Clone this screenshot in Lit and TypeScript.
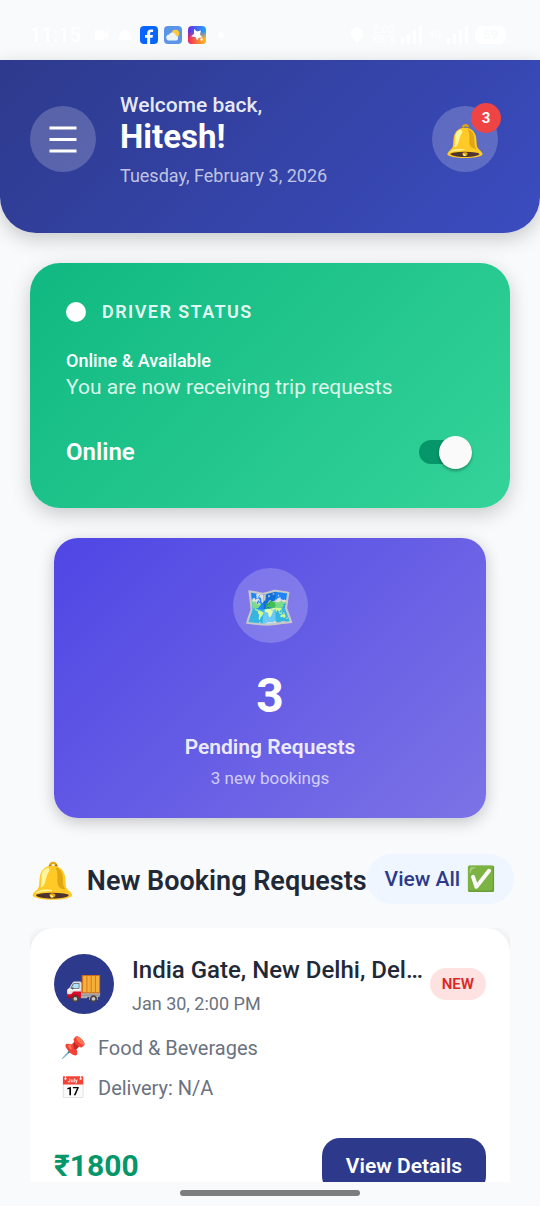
import { LitElement, html, css, svg } from "lit";
import { customElement, property, state } from "lit/decorators.js";

interface Booking {
  pickup: string;
  when: string;
  goods: string;
  delivery: string;
  fare: string;
}

const base = css`
  * { box-sizing: border-box; }
  h1, h2, h3, p { margin: 0; font-weight: inherit; }
  button { font: inherit; border: 0; padding: 0; cursor: pointer; }
  .emoji { font-family: "Noto Color Emoji", sans-serif; font-weight: 400; }
`;

@customElement("status-bar")
export class StatusBar extends LitElement {
  static styles = [base, css`
    :host { display: flex; align-items: center; justify-content: space-between; height: 60px; padding: 10px 34px 0 30px; color: #ffffff; }
    .side { display: flex; align-items: center; gap: 6px; }
    .time { font-size: 20px; line-height: 24px; font-weight: 500; margin-right: 5px; }
    .rate { font-size: 10px; line-height: 10px; font-weight: 500; text-align: center; }
    .dot { width: 6px; height: 6px; border-radius: 3px; background: #ffffff; margin-left: 6px; }
    .battery { font-size: 13px; line-height: 18px; font-weight: 700; padding: 0 8px; border-radius: 7px; background: #ffffff; color: #f8fafc; }
    svg { display: block; }
  `];

  private signal() {
    return html`<svg width="22" height="18" viewBox="0 0 22 18" aria-hidden="true">
      ${[0, 1, 2, 3].map((i) => svg`<rect x=${i * 6} y=${12 - i * 4} width="3" height=${6 + i * 4} rx="1" fill="#fff" />`)}
    </svg>`;
  }

  render() {
    return html`
      <div class="side">
        <span class="time">11:15</span>
        <svg width="18" height="18" viewBox="0 0 18 18" aria-hidden="true"><path d="M3 4h9v3l4-3v10l-4-3v3H3z" fill="#fff" /></svg>
        <svg width="18" height="18" viewBox="0 0 18 18" aria-hidden="true"><path d="M9 4a5 5 0 0 1 5 5l2 5H2l2-5a5 5 0 0 1 5-5z" fill="#fff" /></svg>
        <svg width="18" height="18" viewBox="0 0 18 18" aria-hidden="true">
          <rect width="18" height="18" rx="4" fill="#0866ff" />
          <path d="M7.2 18v-6.3H5V9h2.200V7.400c0-2.700 1.300-4 3.900-4 .8 0 1.500.1 2 .2v2.500h-1.400c-1.200 0-1.600.5-1.600 1.500V9h2.900l-.5 2.700h-2.400V18z" fill="#fff" />
        </svg>
        <svg width="18" height="18" viewBox="0 0 18 18" aria-hidden="true">
          <rect width="18" height="18" rx="4" fill="#5b95e8" />
          <circle cx="11.500" cy="7.500" r="3.800" fill="#ffc93c" />
          <path d="M5.500 14.500a3 3 0 0 1-.4-6 3.600 3.600 0 0 1 6.800 1 2.600 2.600 0 0 1 .6 5z" fill="#eef3f8" />
        </svg>
        <svg width="18" height="18" viewBox="0 0 18 18" aria-hidden="true">
          <defs>
            <linearGradient id="g1" x1="0" y1="0" x2="1" y2="0"><stop offset="0" stop-color="#6a2be0" /><stop offset="1" stop-color="#1ea7ff" /></linearGradient>
            <linearGradient id="g2" x1="0" y1="0" x2="1" y2="0"><stop offset="0" stop-color="#f0285a" /><stop offset="1" stop-color="#ffc21a" /></linearGradient>
            <linearGradient id="g3" x1="0" y1="0" x2="0" y2="1"><stop offset=".3" stop-color="#fff" stop-opacity="0" /><stop offset=".7" stop-color="#fff" /></linearGradient>
            <mask id="m"><rect width="18" height="18" fill="url(#g3)" /></mask>
          </defs>
          <rect width="18" height="18" rx="4" fill="url(#g1)" />
          <rect width="18" height="18" rx="4" fill="url(#g2)" mask="url(#m)" />
          <path d="M6 3l3 2.500 4-1-1 4 2.500 3-3.700.3L9 14.500 7.500 11 3 10.500 6 8z" fill="#fff" />
          <circle cx="13.500" cy="13.500" r="1.200" fill="#fff" />
        </svg>
        <span class="dot"></span>
      </div>
      <div class="side">
        <svg width="18" height="18" viewBox="0 0 18 18" aria-hidden="true"><path d="M9 1l6 3v6l-6 7-6-7V4z" fill="#fff" /></svg>
        <span class="rate">2.00<br />KB/S</span>
        ${this.signal()}
        <span class="rate">4G</span>
        ${this.signal()}
        <span class="battery">59</span>
      </div>
    `;
  }
}

@customElement("booking-card")
export class BookingCard extends LitElement {
  @property({ attribute: false }) booking!: Booking;

  static styles = [base, css`
    :host { display: block; }
    .card { padding: 26px 24px 24px; border-radius: 24px; background: #ffffff; box-shadow: 0 4px 12px rgba(0, 0, 0, 0.16); }
    .top { display: flex; align-items: center; }
    .avatar { flex: none; display: grid; place-items: center; width: 60px; height: 60px; padding-top: 3px; border-radius: 30px; background: #2d3a8c; font-size: 30px; line-height: 36px; }
    .info { flex: 1; min-width: 0; margin-left: 18px; }
    .place { font-size: 24px; line-height: 32px; font-weight: 500; color: #1f2937; white-space: nowrap; overflow: hidden; text-overflow: ellipsis; }
    .when { margin-top: 8px; font-size: 18px; line-height: 20px; color: #6b7280; }
    .tag { flex: none; margin-left: 6px; padding: 0 12px; border-radius: 16px; background: #fee2e2; color: #dc2626; font-size: 15px; line-height: 32px; font-weight: 600; }
    .facts { display: grid; gap: 12px; margin: 20px 0 36px; padding: 0 6px; }
    .fact { display: flex; align-items: center; gap: 12px; font-size: 20px; line-height: 28px; color: #6b7280; }
    .fact .emoji { width: 26px; font-size: 21px; }
    .bottom { display: flex; align-items: center; justify-content: space-between; }
    .fare { font-size: 30px; line-height: 36px; font-weight: 700; color: #059669; }
    .details { padding: 0 24px; border-radius: 18px; background: #2d3a8c; color: #ffffff; font-size: 21px; line-height: 56px; font-weight: 600; }
  `];

  render() {
    const b = this.booking;
    return html`
      <article class="card">
        <div class="top">
          <div class="avatar emoji">🚚</div>
          <div class="info">
            <h3 class="place">${b.pickup}</h3>
            <p class="when">${b.when}</p>
          </div>
          <span class="tag">NEW</span>
        </div>
        <div class="facts">
          <p class="fact"><span class="emoji">📌</span>${b.goods}</p>
          <p class="fact"><span class="emoji">📅</span>${b.delivery}</p>
        </div>
        <div class="bottom">
          <span class="fare">${b.fare}</span>
          <button class="details">View Details</button>
        </div>
      </article>
    `;
  }
}

@customElement("app-root")
export class AppRoot extends LitElement {
  @state() private online = true;

  private bookings: Booking[] = [
    {
      pickup: "India Gate, New Delhi, Delhi, India",
      when: "Jan 30, 2:00 PM",
      goods: "Food & Beverages",
      delivery: "Delivery: N/A",
      fare: "₹1800",
    },
  ];

  static styles = [base, css`
    :host { display: flex; flex-direction: column; height: 100vh; overflow: hidden; background: #f8fafc; color: #1f2937; font-family: Roboto, "Liberation Sans", sans-serif; }
    main { flex: 1; min-height: 0; overflow: hidden; }

    .header { display: flex; align-items: center; padding: 31px 42px 46px 30px; border-radius: 0 0 36px 36px; background: linear-gradient(135deg, #2d3a8c, #3b4cc0); box-shadow: 0 6px 20px rgba(0, 0, 0, 0.2); color: #ffffff; }
    .round { flex: none; display: grid; place-items: center; width: 66px; height: 66px; border-radius: 33px; background: rgba(255, 255, 255, 0.2); color: inherit; }
    .greeting { flex: 1; min-width: 0; margin: 0 24px; }
    .hello { font-size: 21px; line-height: 28px; font-weight: 500; color: rgba(255, 255, 255, 0.9); }
    .name { font-size: 33px; line-height: 36px; font-weight: 700; }
    .date { margin-top: 10px; font-size: 18px; line-height: 22px; color: rgba(255, 255, 255, 0.7); }
    .alerts { position: relative; padding-top: 3px; font-size: 32px; line-height: 36px; }
    .count { position: absolute; top: -3px; right: -3px; width: 30px; height: 30px; border-radius: 15px; background: #ef4444; font-size: 15px; line-height: 30px; font-weight: 700; text-align: center; }

    .status { margin: 30px 30px 0; padding: 36px; border-radius: 30px; background: linear-gradient(135deg, #10b981, #34d399); box-shadow: 0 6px 20px rgba(0, 0, 0, 0.2); color: #ffffff; }
    .status-head { display: flex; align-items: center; gap: 16px; }
    .dot { width: 20px; height: 20px; border-radius: 10px; background: #ffffff; }
    .label { font-size: 18px; line-height: 25px; font-weight: 600; letter-spacing: 0.08em; color: rgba(255, 255, 255, 0.9); }
    .mode { margin-top: 26px; font-size: 18px; line-height: 22px; font-weight: 500; }
    .note { font-size: 21px; line-height: 30px; color: rgba(255, 255, 255, 0.85); }
    .toggle { display: flex; align-items: center; justify-content: space-between; margin-top: 30px; font-size: 24px; line-height: 40px; font-weight: 600; cursor: pointer; }
    .switch { appearance: none; display: flex; align-items: center; justify-content: flex-end; width: 53px; height: 24px; margin: 0 2px 0 0; border-radius: 12px; background: #059669; cursor: pointer; }
    .switch:not(:checked) { justify-content: flex-start; background: #9ca3af; }
    .switch::before { content: ""; width: 33px; height: 33px; border-radius: 17px; background: #fafafa; box-shadow: 0 2px 3px rgba(0, 0, 0, 0.3); }

    .pending { display: flex; flex-direction: column; align-items: center; margin: 30px 54px 0; padding: 30px; border-radius: 24px; background: linear-gradient(135deg, #4f46e5, #7c73e6); box-shadow: 0 4px 16px rgba(0, 0, 0, 0.22); color: #ffffff; }
    .map { display: grid; place-items: center; width: 75px; height: 75px; padding-top: 4px; border-radius: 38px; background: rgba(255, 255, 255, 0.2); font-size: 42px; line-height: 50px; }
    .total { margin-top: 23px; font-size: 48px; line-height: 60px; font-weight: 700; }
    .what { margin-top: 6px; font-size: 21px; line-height: 30px; font-weight: 600; color: rgba(255, 255, 255, 0.9); }
    .extra { margin-top: 6px; font-size: 17px; line-height: 20px; color: rgba(255, 255, 255, 0.7); }

    .section { display: flex; align-items: center; justify-content: space-between; margin: 36px 26px 24px 30px; }
    .title { display: flex; align-items: center; gap: 12px; padding-top: 3px; font-size: 27px; line-height: 36px; font-weight: 600; white-space: nowrap; }
    .title .emoji { font-size: 36px; }
    .all { display: flex; align-items: center; gap: 6px; padding: 1px 18px 0; border-radius: 25px; background: #eff6ff; color: #2d3a8c; font-size: 21px; line-height: 49px; font-weight: 500; white-space: nowrap; text-decoration: none; }
    .all .emoji { font-size: 24px; }
    .list { margin: 0 30px; overflow: hidden; }

    .gesture { flex: none; display: grid; place-items: center; height: 24px; padding-bottom: 3px; }
    .pill { width: 180px; height: 6px; border-radius: 3px; background: #7b7d7e; }
  `];

  private toggle(e: Event) {
    this.online = (e.target as HTMLInputElement).checked;
  }

  render() {
    return html`
      <main>
        <status-bar></status-bar>
        <header class="header">
          <button class="round" aria-label="Open menu">
            <svg width="28" height="28" viewBox="0 0 28 28" aria-hidden="true">
              <path d="M.5 3h27M.5 14.500h27M.5 26h27" stroke="#fff" stroke-width="3" />
            </svg>
          </button>
          <div class="greeting">
            <p class="hello">Welcome back,</p>
            <h1 class="name">Hitesh!</h1>
            <p class="date">Tuesday, February 3, 2026</p>
          </div>
          <button class="round alerts" aria-label="Notifications, 3 new">
            <span class="emoji">🔔</span>
            <span class="count">3</span>
          </button>
        </header>

        <section class="status">
          <div class="status-head">
            <span class="dot"></span>
            <h2 class="label">DRIVER STATUS</h2>
          </div>
          <p class="mode">${this.online ? "Online & Available" : "Offline"}</p>
          <p class="note">${this.online ? "You are now receiving trip requests" : "You are not receiving trip requests"}</p>
          <label class="toggle">
            ${this.online ? "Online" : "Offline"}
            <input class="switch" type="checkbox" role="switch" .checked=${this.online} @change=${this.toggle} />
          </label>
        </section>

        <section class="pending">
          <div class="map emoji">🗺️</div>
          <p class="total">3</p>
          <p class="what">Pending Requests</p>
          <p class="extra">3 new bookings</p>
        </section>

        <div class="section">
          <h2 class="title"><span class="emoji">🔔</span>New Booking Requests</h2>
          <a class="all" href="#all">View All <span class="emoji">✅</span></a>
        </div>
        <div class="list">
          ${this.bookings.map((b) => html`<booking-card .booking=${b}></booking-card>`)}
        </div>
      </main>
      <footer class="gesture"><span class="pill"></span></footer>
    `;
  }
}
